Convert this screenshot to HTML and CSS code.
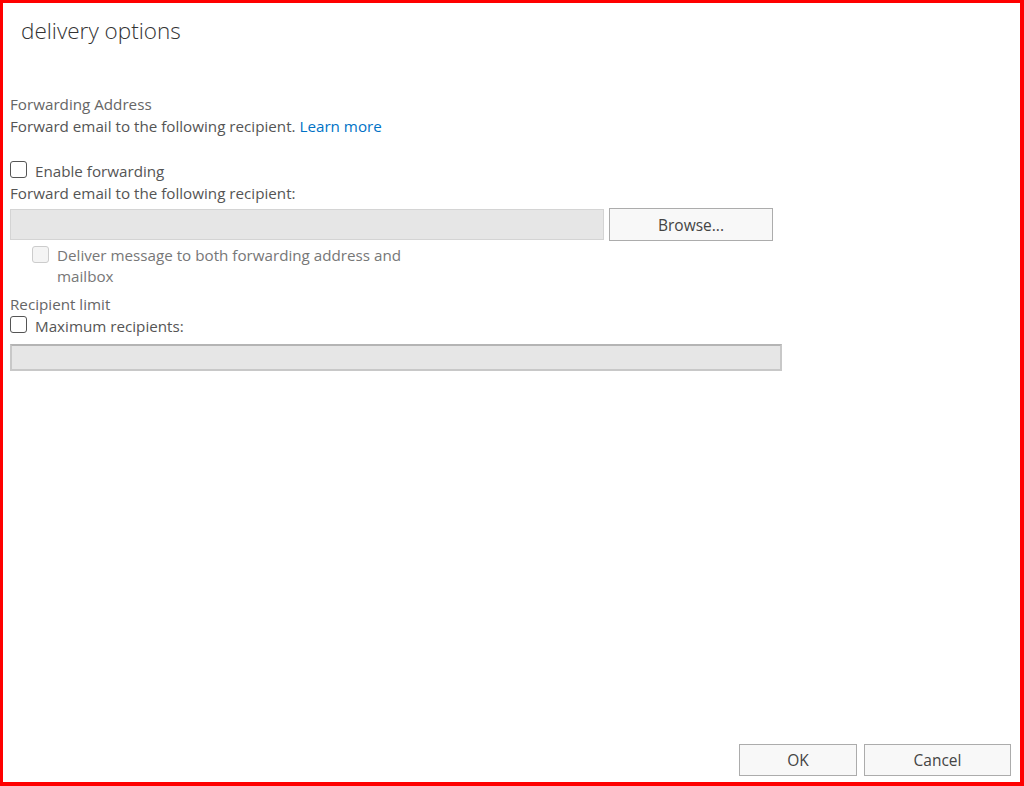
FILE: index.html
```html
<!DOCTYPE html>
<html lang="en">
<head>
    <meta charset="UTF-8">
    <title>delivery options</title>
    <link rel="stylesheet" href="styles.css">
</head>
<body>
    <div class="dialog">
        <h1 class="dialog-title">delivery options</h1>

        <div class="content">
            <!-- Forwarding -->
            <div class="section-title">Forwarding Address</div>
            <div class="text">Forward email to the following recipient. <a href="#">Learn more</a></div>

            <label class="check-row first-check">
                <input type="checkbox">
                <span>Enable forwarding</span>
            </label>
            <div class="text">Forward email to the following recipient:</div>

            <div class="input-row">
                <input type="text" class="field field-forward" disabled>
                <button class="btn btn-browse">Browse...</button>
            </div>

            <label class="check-row sub-check disabled">
                <input type="checkbox" disabled>
                <span>Deliver message to both forwarding address and mailbox</span>
            </label>

            <!-- Recipient limit -->
            <div class="section-title limit-title">Recipient limit</div>
            <label class="check-row">
                <input type="checkbox">
                <span>Maximum recipients:</span>
            </label>
            <input type="text" class="field field-max" disabled>
        </div>

        <div class="footer">
            <button class="btn btn-ok">OK</button>
            <button class="btn btn-cancel">Cancel</button>
        </div>
    </div>
</body>
</html>
```

FILE: styles.css
```css
/* General */
body {
    margin: 0;
    font-family: 'Open Sans', 'Liberation Sans', sans-serif;
    font-size: 15.2px;
    color: #555;
    background: #fff;
}

.dialog {
    box-sizing: border-box;
    height: 786px;
    border-style: solid;
    border-color: #ff0000;
    border-width: 3px 4px 4px 3px;
    display: flex;
    flex-direction: column;
}

.dialog-title {
    margin: 13px 0 0 18px;
    font-size: 22.5px;
    font-weight: 300;
    line-height: 30px;
    color: #333;
}

/* Content */
.content {
    padding: 47px 0 0 7px;
    display: flex;
    flex-direction: column;
    align-items: flex-start;
}

.section-title,
.text,
.check-row {
    line-height: 22px;
}

.section-title {
    color: #666;
}

.text a {
    color: #0072c6;
    text-decoration: none;
}

.check-row {
    display: flex;
    align-items: flex-start;
    gap: 8px;
}

.check-row input {
    appearance: none;
    -webkit-appearance: none;
    box-sizing: border-box;
    width: 17px;
    height: 17px;
    margin: 1px 0 0;
    border: 1px solid #555;
    border-radius: 3px;
    background: #fff;
}

.first-check {
    margin-top: 23px;
}

.sub-check {
    margin: 4px 0 0 22px;
    line-height: 21px;
}

.sub-check span {
    max-width: 365px;
}

.check-row.disabled {
    color: #777;
}

.check-row.disabled input {
    border-color: #ccc;
    background: #f4f4f4;
    margin-top: 1px;
}

.limit-title {
    margin-top: 6px;
}

/* Inputs */
.input-row {
    display: flex;
    align-items: center;
    gap: 5px;
    margin-top: 4px;
}

.field {
    box-sizing: border-box;
    background: #e6e6e6;
    font: inherit;
}

.field-forward {
    width: 594px;
    height: 31px;
    border: 1px solid #d4d4d4;
}

.field-max {
    width: 772px;
    height: 27px;
    margin-top: 7px;
    border: 2px solid #c8c8c8;
    border-top-color: #b4b4b4;
}

/* Buttons */
.btn {
    box-sizing: border-box;
    font: inherit;
    font-size: 15.5px;
    color: #444;
    background: #f8f8f8;
    border: 1px solid #acacac;
    padding: 0;
}

.btn-browse {
    width: 164px;
    height: 33px;
}

.footer {
    margin-top: auto;
    display: flex;
    justify-content: flex-end;
    gap: 7px;
    padding: 0 9px 6px 0;
}

.btn-ok {
    width: 118px;
    height: 32px;
}

.btn-cancel {
    width: 147px;
    height: 32px;
}
```
